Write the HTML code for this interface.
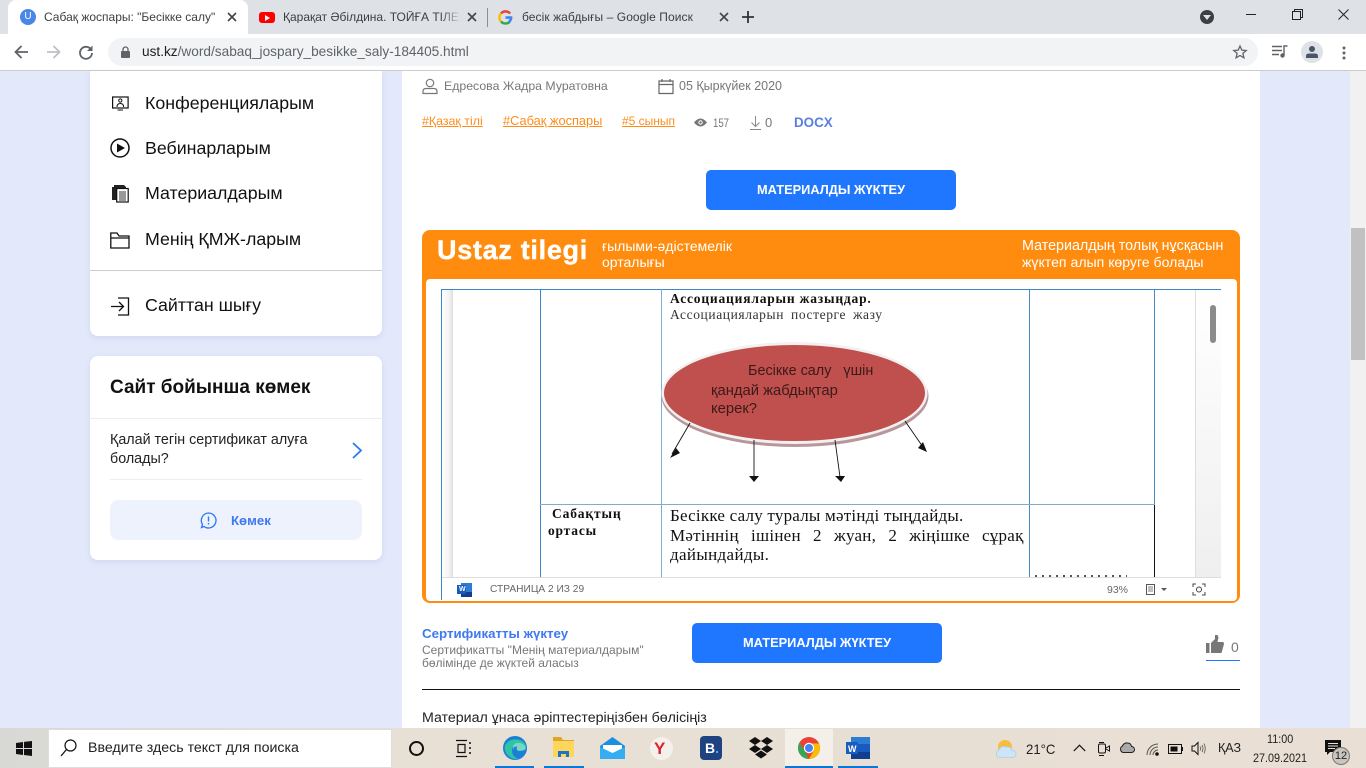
<!DOCTYPE html>
<html><head><meta charset="utf-8"><style>
*{box-sizing:border-box}
html,body{margin:0;padding:0;width:1366px;height:768px;overflow:hidden;background:#e3e9fb;font-family:"Liberation Sans","Noto Sans CJK SC",sans-serif}
.a{position:absolute}
.t{position:absolute;white-space:nowrap;line-height:1;transform-origin:0 50%}
svg{position:absolute;overflow:visible}
.s{font-family:"Liberation Serif","Noto Serif CJK SC",serif;color:#111}
</style></head><body>
<!-- chrome -->
<div class="a" style="left:0;top:0;width:1366px;height:34px;background:#dee1e6"></div>
<div class="a" style="left:0;top:34px;width:1366px;height:37px;background:#fff;border-bottom:1px solid #ccc"></div>
<div class="a" style="left:8px;top:0;width:240px;height:34px;background:#fff;border-radius:8px 8px 0 0"></div>
<div class="a" style="left:20px;top:9px;width:16px;height:16px;border-radius:50%;background:#4a86e8;color:#fff;font-size:10px;text-align:center;line-height:16px">U</div>
<div class="t" style="left:44px;top:11px;font-size:12px;color:#3c4043">Сабақ жоспары: "Бесікке салу"</div>
<svg style="left:227px;top:12px" width="10" height="10" viewBox="0 0 10 10"><path d="M1 1L9 9M9 1L1 9" stroke="#444" stroke-width="1.6"/></svg>
<div class="a" style="left:259px;top:12px;width:16px;height:11px;background:#f00;border-radius:3px"></div>
<svg style="left:265px;top:15px" width="5" height="6"><path d="M0 0L5 3L0 6Z" fill="#fff"/></svg>
<div class="t" style="left:283px;top:11px;font-size:12px;color:#3c4043;width:177px;overflow:hidden">Қарақат Әбілдина. ТОЙҒА ТІЛЕК</div>
<div class="a" style="left:440px;top:8px;width:22px;height:20px;background:linear-gradient(90deg,rgba(222,225,230,0),#dee1e6)"></div>
<svg style="left:467px;top:12px" width="10" height="10" viewBox="0 0 10 10"><path d="M1 1L9 9M9 1L1 9" stroke="#444" stroke-width="1.6"/></svg>
<div class="a" style="left:487px;top:8px;width:1px;height:19px;background:#8a8d91"></div>
<svg style="left:498px;top:10px" width="15" height="15" viewBox="0 0 16 16"><path d="M3.200 3.700A6.500 6.500 0 0 1 13 3.700" fill="none" stroke="#ea4335" stroke-width="2.600"/><path d="M3.300 3.500A6.500 6.500 0 0 0 3.300 12.500" fill="none" stroke="#fbbc05" stroke-width="2.600"/><path d="M3.200 12.300A6.500 6.500 0 0 0 12.500 12.600" fill="none" stroke="#34a853" stroke-width="2.600"/><path d="M8 6.700H15.200A7.200 7.200 0 0 1 12.800 13.500L10.800 11.700Q12 10.700 12.300 9.400H8Z" fill="#4285f4"/></svg>
<div class="t" style="left:522px;top:11px;font-size:12px;color:#3c4043;letter-spacing:.07px">бесік жабдығы – Google Поиск</div>
<svg style="left:719px;top:12px" width="10" height="10" viewBox="0 0 10 10"><path d="M1 1L9 9M9 1L1 9" stroke="#444" stroke-width="1.6"/></svg>
<svg style="left:741px;top:10px" width="14" height="14" viewBox="0 0 14 14"><path d="M7 1V13M1 7H13" stroke="#333" stroke-width="1.8"/></svg>
<div class="a" style="left:1200px;top:10px;width:14px;height:14px;border-radius:50%;background:#3c4043"></div>
<svg style="left:1203px;top:15px" width="8" height="5"><path d="M0 0H8L4 5Z" fill="#dee1e6"/></svg>
<div class="a" style="left:1246px;top:14px;width:10px;height:1px;background:#222"></div>
<svg style="left:1292px;top:9px" width="11" height="11" viewBox="0 0 11 11"><path d="M.5 2.500H8.500V10.500H.5ZM2.500 2.500V.5H10.500V8.500H8.500" fill="none" stroke="#222"/></svg>
<svg style="left:1338px;top:9px" width="11" height="11" viewBox="0 0 11 11"><path d="M.5 .5L10.500 10.500M10.500 .5L.5 10.500" stroke="#222" stroke-width="1"/></svg>
<svg style="left:14px;top:45px" width="15" height="14" viewBox="0 0 15 14"><path d="M14 7H2M7.500 1L1.500 7L7.500 13" fill="none" stroke="#5f6368" stroke-width="1.800"/></svg>
<svg style="left:46px;top:45px" width="15" height="14" viewBox="0 0 15 14"><path d="M1 7H13M7.500 1L13.500 7L7.500 13" fill="none" stroke="#bdc1c6" stroke-width="1.800"/></svg>
<svg style="left:79px;top:45px" width="14" height="14" viewBox="0 0 14 14"><path d="M12 4.500A6 6 0 1 0 13 8" fill="none" stroke="#5f6368" stroke-width="1.800"/><path d="M13.500 .5V6H8Z" fill="#5f6368"/></svg>
<div class="a" style="left:108px;top:38px;width:1150px;height:28px;border-radius:14px;background:#f1f3f4"></div>
<svg style="left:121px;top:46px" width="9" height="12" viewBox="0 0 9 12"><path d="M2 5V3.500A2.500 2.500 0 0 1 7 3.500V5" fill="none" stroke="#5f6368" stroke-width="1.300"/><rect y="5" width="9" height="7" rx="1" fill="#5f6368"/></svg>
<div class="t" style="left:142px;top:45px;font-size:13.650px;color:#5f6368"><span style="color:#202124">ust.kz</span>/word/sabaq_jospary_besikke_saly-184405.html</div>
<svg style="left:1233px;top:45px" width="14" height="14" viewBox="0 0 14 14"><path d="M7 1L8.800 5.100L13.200 5.500L9.900 8.400L10.900 12.800L7 10.500L3.100 12.800L4.100 8.400L.8 5.500L5.200 5.100Z" fill="none" stroke="#5f6368" stroke-width="1.300"/></svg>
<svg style="left:1272px;top:45px" width="16" height="13" viewBox="0 0 16 13"><path d="M0 1.500H10M0 5.500H10M0 9.500H7" stroke="#5f6368" stroke-width="1.400"/><path d="M12 10.500V1H15.500" fill="none" stroke="#5f6368" stroke-width="1.400"/><circle cx="10.500" cy="10.500" r="2.200" fill="#5f6368"/></svg>
<div class="a" style="left:1301px;top:41px;width:22px;height:22px;border-radius:50%;background:#dee1e6"></div>
<svg style="left:1306px;top:46px" width="12" height="12" viewBox="0 0 12 12"><circle cx="6" cy="3" r="3" fill="#4a5568"/><path d="M0 12V10Q0 7.500 3 7.500H9Q12 7.500 12 10V12Z" fill="#4a5568"/></svg>
<svg style="left:1342px;top:46px" width="4" height="14"><circle cx="2" cy="2" r="1.500" fill="#5f6368"/><circle cx="2" cy="7" r="1.500" fill="#5f6368"/><circle cx="2" cy="12" r="1.500" fill="#5f6368"/></svg>

<!-- page -->
<div class="a" style="left:1350px;top:71px;width:16px;height:657px;background:#f1f1f1"></div>
<div class="a" style="left:1351px;top:228px;width:14px;height:132px;background:#c1c1c1"></div>
<div class="a" style="left:90px;top:71px;width:292px;height:265px;background:#fff;border-radius:0 0 8px 8px;box-shadow:0 2px 6px rgba(120,135,190,.18)"></div>
<div class="a" style="left:90px;top:356px;width:292px;height:204px;background:#fff;border-radius:8px;box-shadow:0 2px 6px rgba(120,135,190,.18)"></div>
<div class="a" style="left:402px;top:71px;width:858px;height:657px;background:#fff"></div>

<!-- left menu -->
<svg style="left:112px;top:96px" width="17" height="16" viewBox="0 0 17 16"><rect x=".6" y="1" width="15.500" height="11" fill="none" stroke="#111" stroke-width="1.200"/><circle cx="8.300" cy="4.500" r="1.600" fill="none" stroke="#111"/><path d="M5 11Q5 7.500 8.300 7.500Q11.600 7.500 11.600 11M5.500 14H11" fill="none" stroke="#111"/></svg>
<div class="t" style="left:145px;top:95px;font-size:17.800px;color:#111">Конференцияларым</div>
<svg style="left:110px;top:138px" width="20" height="20" viewBox="0 0 20 20"><circle cx="10" cy="10" r="9" fill="none" stroke="#111" stroke-width="1.500"/><path d="M7 5.500L15 10L7 14.500Z" fill="#111"/></svg>
<div class="t" style="left:145px;top:140px;font-size:17.800px;color:#111">Вебинарларым</div>
<svg style="left:111px;top:184px" width="19" height="19" viewBox="0 0 19 19"><path d="M1 3H3V1H13L15 3V5H6V16H1Z" fill="#222"/><rect x="5.700" y="4.500" width="11.500" height="13.500" fill="#fff" stroke="#111" stroke-width="1.200"/><path d="M8 8H15M8 10H15M8 12H15M8 14H15M8 16H15" stroke="#333" stroke-width=".9"/></svg>
<div class="t" style="left:145px;top:185px;font-size:17.800px;color:#111">Материалдарым</div>
<svg style="left:110px;top:232px" width="20" height="17" viewBox="0 0 20 17"><path d="M.8 16V1H7L9 4H19V16ZM.8 6H19" fill="none" stroke="#111" stroke-width="1.300"/></svg>
<div class="t" style="left:145px;top:231px;font-size:17.800px;color:#111">Менің ҚМЖ-ларым</div>
<div class="a" style="left:90px;top:270px;width:292px;height:1px;background:#ccc"></div>
<svg style="left:110px;top:297px" width="20" height="19" viewBox="0 0 20 19"><path d="M8 1H18.500V18H8M1 9.500H13M9 5L13.500 9.500L9 14" fill="none" stroke="#111" stroke-width="1.300"/></svg>
<div class="t" style="left:145px;top:297px;font-size:17.800px;color:#111">Сайттан шығу</div>
<div class="t" style="left:110px;top:378px;font-size:19px;font-weight:bold;color:#111">Сайт бойынша көмек</div>
<div class="a" style="left:90px;top:418px;width:292px;height:1px;background:#eee"></div>
<div class="t" style="left:110px;top:433px;font-size:14.300px;color:#222">Қалай тегін сертификат алуға</div>
<div class="t" style="left:110px;top:452px;font-size:14.300px;color:#222">болады?</div>
<svg style="left:352px;top:442px" width="10" height="17" viewBox="0 0 10 17"><path d="M1 1L9 8.500L1 16" fill="none" stroke="#2a7af5" stroke-width="1.800"/></svg>
<div class="a" style="left:110px;top:479px;width:252px;height:1px;background:#eee"></div>
<div class="a" style="left:110px;top:500px;width:252px;height:40px;background:#eef2fd;border-radius:8px"></div>
<svg style="left:200px;top:512px" width="17" height="17" viewBox="0 0 17 17"><path d="M8.500 1A7.500 7.500 0 1 1 4 14.500L1.500 15.500L2.500 12.500A7.500 7.500 0 0 1 8.500 1Z" fill="none" stroke="#2a7af5" stroke-width="1.300"/><path d="M8.500 4.500V9.500M8.500 11V12.500" stroke="#2a7af5" stroke-width="1.400"/></svg>
<div class="t" style="left:231px;top:514px;font-size:13.200px;font-weight:bold;color:#3f78f0">Көмек</div>

<!-- meta -->
<svg style="left:422px;top:78px" width="16" height="16" viewBox="0 0 16 16"><circle cx="8" cy="5" r="3.700" fill="none" stroke="#777" stroke-width="1.200"/><path d="M1 15.500V13.500Q1 10.500 4 10.500H12Q15 10.500 15 13.500V15.500Z" fill="none" stroke="#777" stroke-width="1.200"/></svg>
<div class="t" style="left:444px;top:80px;font-size:12.300px;color:#777">Едресова Жадра Муратовна</div>
<svg style="left:658px;top:78px" width="16" height="16" viewBox="0 0 16 16"><path d="M1 3H15V15.500H1ZM1 6.500H15M4 1V4M12 1V4" fill="none" stroke="#666" stroke-width="1.200"/></svg>
<div class="t" style="left:679px;top:80px;font-size:12.500px;color:#777">05 Қыркүйек 2020</div>
<div class="t" style="left:422px;top:115px;font-size:12.400px;color:#ff8c1a;text-decoration:underline">#Қазақ тілі</div>
<div class="t" style="left:503px;top:115px;font-size:12.800px;color:#ff8c1a;text-decoration:underline">#Сабақ жоспары</div>
<div class="t" style="left:622px;top:115px;font-size:12px;color:#ff8c1a;text-decoration:underline">#5 сынып</div>
<svg style="left:694px;top:118px" width="13" height="9" viewBox="0 0 13 9"><path d="M0 4.500Q6.500 -3.500 13 4.500Q6.500 12.500 0 4.500Z" fill="#777"/><circle cx="6.500" cy="4.500" r="2.200" fill="#fff"/><circle cx="6.500" cy="4.500" r="1.200" fill="#777"/></svg>
<div class="t" style="left:713px;top:117px;font-size:12px;color:#777;transform:scaleX(.8)">157</div>
<svg style="left:750px;top:116px" width="11" height="14" viewBox="0 0 11 14"><path d="M5.500 0V10M1.500 6.500L5.500 10.500L9.500 6.500M0 13.500H11" fill="none" stroke="#888" stroke-width="1"/></svg>
<div class="t" style="left:765px;top:116px;font-size:13px;color:#777">0</div>
<div class="t" style="left:794px;top:116px;font-size:13.400px;font-weight:bold;color:#5a7fe0">DOCX</div>
<div class="a" style="left:706px;top:170px;width:250px;height:40px;background:#1f77ff;border-radius:5px"></div>
<div class="t" style="left:757px;top:184px;font-size:12.800px;font-weight:bold;color:#fff">МАТЕРИАЛДЫ ЖҮКТЕУ</div>

<!-- viewer frame -->
<div class="a" style="left:422px;top:230px;width:818px;height:373px;background:#ff8c0e;border-radius:8px"></div>
<div class="a" style="left:426px;top:279px;width:811px;height:322px;background:#fff;border-radius:4px"></div>
<div class="t" style="left:437px;top:237px;font-size:27px;font-weight:bold;color:#fff;letter-spacing:.7px;-webkit-text-stroke:.4px #fff">Ustaz tilegi</div>
<div class="t" style="left:602px;top:239px;font-size:14px;color:#fff">ғылыми-әдістемелік</div>
<div class="t" style="left:602px;top:255px;font-size:14px;color:#fff">орталығы</div>
<div class="t" style="left:1022px;top:239px;font-size:14.300px;color:#fff">Материалдың толық нұсқасын</div>
<div class="t" style="left:1022px;top:255px;font-size:14.100px;color:#fff">жүктеп алып көруге болады</div>

<div class="a" style="left:441px;top:289px;width:780px;height:311px;overflow:hidden;background:#fff">
 <div class="a" style="left:0;top:0;width:780px;height:1px;background:#3d85c6"></div>
 <div class="a" style="left:0;top:0;width:1px;height:311px;background:#3d85c6"></div>
 <div class="a" style="left:1px;top:1px;width:11px;height:287px;background:linear-gradient(90deg,#fff,#f2f2f2 70%,#dcdcdc)"></div>
 <div class="a" style="left:754px;top:1px;width:26px;height:287px;background:linear-gradient(180deg,#fff,#efefef);border-left:1px solid #ddd"></div>
 <div class="a" style="left:99px;top:0;width:1px;height:288px;background:#3d85c6"></div>
 <div class="a" style="left:220px;top:0;width:1px;height:288px;background:#7fadd0"></div>
 <div class="a" style="left:588px;top:0;width:1px;height:288px;background:#4a8fc4"></div>
 <div class="a" style="left:713px;top:0;width:1px;height:215px;background:#4a8fc4"></div>
 <div class="a" style="left:713px;top:215px;width:1px;height:73px;background:#111"></div>
 <div class="a" style="left:99px;top:215px;width:615px;height:1px;background:#7fadd0"></div>
 <div class="a" style="left:769px;top:16px;width:6px;height:38px;background:#8a8a8a;border-radius:3px"></div>
 <div class="a" style="left:1px;top:288px;width:779px;height:23px;background:#fff;border-top:1px solid #ddd"></div>
</div>
<div class="t s" style="left:670px;top:292px;font-size:13.500px;font-weight:bold;letter-spacing:.8px">Ассоциацияларын жазыңдар.</div>
<div class="t s" style="left:670px;top:308px;font-size:13.500px;color:#333;letter-spacing:.6px;word-spacing:3px">Ассоциацияларын постерге жазу</div>
<svg style="left:660px;top:340px" width="280" height="150" viewBox="0 0 280 150">
<ellipse cx="135" cy="56" rx="133.500" ry="51" fill="#b8979a"/>
<ellipse cx="134.500" cy="53" rx="133" ry="51" fill="#f2f0f0"/>
<ellipse cx="134.500" cy="53" rx="130.500" ry="48" fill="#c0504d"/>
<g stroke="#111" stroke-width=".9"><path d="M30 83L12 114"/><path d="M94 100L94 137"/><path d="M175 100L180 137"/><path d="M245 81L265 110"/></g>
<g fill="#111"><path d="M16 108L10 118L20 113Z"/><path d="M89 136H99L94 142Z"/><path d="M175 136H185L181 142Z"/><path d="M258 108L267 112L263 102Z"/></g>
</svg>
<div class="t" style="left:748px;top:364px;font-size:14.400px;color:#3a1a1a;white-space:pre">Бесікке салу   үшін</div>
<div class="t" style="left:711px;top:384px;font-size:14.800px;color:#3a1a1a">қандай жабдықтар</div>
<div class="t" style="left:711px;top:402px;font-size:14.800px;color:#3a1a1a">керек?</div>
<div class="t s" style="left:552px;top:507px;font-size:13.500px;font-weight:bold;letter-spacing:.85px">Сабақтың</div>
<div class="t s" style="left:548px;top:524px;font-size:13.500px;font-weight:bold;letter-spacing:.8px">ортасы</div>
<div class="t s" style="left:670px;top:507px;font-size:17px;letter-spacing:.22px">Бесікке салу туралы мәтінді тыңдайды.</div>
<div class="t s" style="left:670px;top:527px;font-size:17px;letter-spacing:.25px;word-spacing:7.700px">Мәтіннің ішінен 2 жуан, 2 жіңішке сұрақ</div>
<div class="t s" style="left:670px;top:546px;font-size:17px;letter-spacing:.35px">дайындайды.</div>
<div class="a" style="left:1035px;top:575px;width:92px;height:2px;background:repeating-linear-gradient(90deg,#555 0 2px,transparent 2px 7px)"></div>
<svg style="left:457px;top:583px" width="15" height="14" viewBox="0 0 15 14"><rect x="4" width="11" height="14" fill="#2b7cd3"/><rect x="4" y="9" width="11" height="5" fill="#103f91"/><rect y="2" width="9" height="9" fill="#185abd"/></svg>
<div class="t" style="left:459px;top:586px;font-size:7px;font-weight:bold;color:#fff">W</div>
<div class="t" style="left:490px;top:585px;font-size:10.200px;color:#666">СТРАНИЦА 2 ИЗ 29</div>
<div class="t" style="left:1107px;top:585px;font-size:10.500px;color:#666">93%</div>
<svg style="left:1146px;top:584px" width="22" height="11" viewBox="0 0 22 11"><rect x=".5" y=".5" width="8" height="10" fill="none" stroke="#555"/><path d="M2 3H7M2 5H7M2 7H7" stroke="#555" stroke-width=".8"/><path d="M15 4H21L18 7Z" fill="#555"/></svg>
<svg style="left:1193px;top:584px" width="12" height="11" viewBox="0 0 12 11"><path d="M0 3V0H3M9 0H12V3M12 8V11H9M3 11H0V8" fill="none" stroke="#444"/><circle cx="6" cy="5.500" r="2.500" fill="none" stroke="#444"/></svg>

<!-- bottom content -->
<div class="t" style="left:422px;top:627px;font-size:13.300px;font-weight:bold;color:#3f78f0">Сертификатты жүктеу</div>
<div class="t" style="left:422px;top:644px;font-size:12px;color:#777;letter-spacing:.02px">Сертификатты "Менің материалдарым"</div>
<div class="t" style="left:422px;top:657px;font-size:12px;color:#777">бөлімінде де жүктей аласыз</div>
<div class="a" style="left:692px;top:623px;width:250px;height:40px;background:#1f77ff;border-radius:5px"></div>
<div class="t" style="left:743px;top:637px;font-size:12.800px;font-weight:bold;color:#fff">МАТЕРИАЛДЫ ЖҮКТЕУ</div>
<svg style="left:1206px;top:635px" width="18" height="19" viewBox="0 0 18 19"><rect y="8" width="3.500" height="10" fill="#777"/><path d="M5 8L9 4V0H11.500L12.500 2.500L11.500 7H17.500L18 9L15.500 18H5Z" fill="#777"/></svg>
<div class="t" style="left:1231px;top:640px;font-size:14px;color:#777">0</div>
<div class="a" style="left:1206px;top:660px;width:34px;height:1px;background:#1f77ff"></div>
<div class="a" style="left:422px;top:689px;width:818px;height:1px;background:#111"></div>
<div class="t" style="left:422px;top:711px;font-size:14.200px;color:#222">Материал ұнаса әріптестеріңізбен бөлісіңіз</div>

<!-- taskbar -->
<div class="a" style="left:0;top:728px;width:1366px;height:40px;background:linear-gradient(90deg,#d8d9d5,#e8dfd5 30%,#e9dfd4)"></div>
<svg style="left:16px;top:741px" width="16" height="15" viewBox="0 0 16 15"><path d="M0 2L7 1V7H0ZM8 .9L16 0V7H8ZM0 8H7V14L0 13ZM8 8H16V15L8 14Z" fill="#111"/></svg>
<div class="a" style="left:48px;top:729px;width:344px;height:39px;background:#fff;border:1px solid #ddd"></div>
<svg style="left:60px;top:739px" width="17" height="18" viewBox="0 0 17 18"><circle cx="10.500" cy="6.500" r="5.500" fill="none" stroke="#111" stroke-width="1.200"/><path d="M6.500 10.500L1 17" stroke="#111" stroke-width="1.300"/></svg>
<div class="t" style="left:88px;top:741px;font-size:14.200px;color:#222">Введите здесь текст для поиска</div>
<div class="a" style="left:409px;top:741px;width:15px;height:15px;border-radius:50%;border:2.500px solid #111"></div>
<svg style="left:455px;top:740px" width="17" height="17" viewBox="0 0 17 17"><path d="M1 .5H12M1 16.500H12M3 4.500H10V12.500H3Z" fill="none" stroke="#111" stroke-width="1.200"/><path d="M14 3H16M14 8H16M14 13H16" stroke="#111" stroke-width="1.500"/></svg>
<svg style="left:503px;top:736px" width="24" height="24" viewBox="0 0 24 24"><circle cx="12" cy="12" r="12" fill="#1b7fd4"/><path d="M2 14A10 8 0 0 1 23 10Q23 15 16 15Q13 15 14 11Q9 9 9 15Q9 20 15 23A12 12 0 0 1 2 14Z" fill="#2fc4a8"/><path d="M10 15Q10 10 15 10.500Q12 13 15 14.500Q20 15.500 23 13Q22 8 17 7Q12 6 10 10Z" fill="#fff" opacity=".35"/></svg>
<svg style="left:553px;top:737px" width="21" height="22" viewBox="0 0 21 22"><path d="M0 0H8L10 3H21V20H0Z" fill="#e0a526"/><rect y="4" width="21" height="16" fill="#ffd65c"/><path d="M5 14H16V20H13V17H8V20H5Z" fill="#1e73c8"/></svg>
<svg style="left:600px;top:737px" width="25" height="22" viewBox="0 0 25 22"><path d="M0 9L12.500 0L25 9V22H0Z" fill="#1b8fe0"/><path d="M3 8H22V12L12.500 17L3 12Z" fill="#fff"/><path d="M0 10L12.500 16L25 10V22H0Z" fill="#35aef0"/></svg>
<div class="a" style="left:650px;top:737px;width:23px;height:23px;border-radius:50%;background:#f4f1ec"></div>
<div class="t" style="left:654px;top:740px;font-size:17px;font-weight:bold;color:#e1212b">Y</div>
<div class="a" style="left:700px;top:736px;width:22px;height:24px;border-radius:4px;background:#1f4381"></div>
<div class="t" style="left:705px;top:741px;font-size:14px;font-weight:bold;color:#fff">B<span style="color:#4ab4f0">.</span></div>
<svg style="left:749px;top:737px" width="24" height="22" viewBox="0 0 24 22"><path d="M6 0L12 4L6 8L0 4ZM18 0L24 4L18 8L12 4ZM6 8L12 12L6 16L0 12ZM18 8L24 12L18 16L12 12ZM6 17.500L12 13.500L18 17.500L12 21.500Z" fill="#111"/></svg>
<div class="a" style="left:785px;top:729px;width:48px;height:39px;background:#f4efe9"></div>
<svg style="left:798px;top:737px" width="22" height="22" viewBox="0 0 22 22"><circle cx="11" cy="11" r="11" fill="#ea4335"/><path d="M1.500 5.500L7 14.500L11 22A11 11 0 0 1 1.500 5.500Z" fill="#34a853"/><path d="M11 6.500H21A11 11 0 0 1 11 22L16 13Z" fill="#fbbc05"/><circle cx="11" cy="11" r="5.200" fill="#fff"/><circle cx="11" cy="11" r="4" fill="#4285f4"/></svg>
<svg style="left:846px;top:737px" width="24" height="22" viewBox="0 0 24 22"><rect x="5" width="19" height="22" fill="#2b7cd3"/><rect x="5" y="15" width="19" height="7" fill="#103f91"/><rect x="5" y="7" width="19" height="8" fill="#185abd"/><rect y="5" width="12" height="12" fill="#1a5cbf"/></svg>
<div class="t" style="left:848px;top:745px;font-size:9px;font-weight:bold;color:#fff">W</div>
<div class="a" style="left:495px;top:766px;width:39px;height:2px;background:#0a78d4"></div>
<div class="a" style="left:544px;top:766px;width:40px;height:2px;background:#0a78d4"></div>
<div class="a" style="left:785px;top:766px;width:48px;height:2px;background:#0a78d4"></div>
<div class="a" style="left:838px;top:766px;width:40px;height:2px;background:#0a78d4"></div>
<svg style="left:995px;top:740px" width="22" height="18" viewBox="0 0 22 18"><circle cx="10" cy="7" r="7" fill="#f8bd3c"/><path d="M4 17.500A4 4 0 0 1 4 10Q6 5 11 7Q16 6 17 10.500A3.500 3.500 0 0 1 18 17.500Z" fill="#cfe4f6" stroke="#a8cfee" stroke-width=".8"/></svg>
<div class="t" style="left:1026px;top:742px;font-size:14px;color:#222;transform:scaleX(.94)">21°C</div>
<svg style="left:1073px;top:744px" width="13" height="8" viewBox="0 0 13 8"><path d="M.8 7L6.500 1.200L12.200 7" fill="none" stroke="#111" stroke-width="1.200"/></svg>
<svg style="left:1098px;top:741px" width="12" height="16" viewBox="0 0 12 16"><rect x=".5" y="3" width="7" height="9" rx="1.500" fill="none" stroke="#111"/><path d="M8 7L11.500 5V10L8 8M1 1.500H6M1 14.500H6" fill="none" stroke="#111"/></svg>
<svg style="left:1119px;top:742px" width="16" height="11" viewBox="0 0 16 11"><path d="M4 10.500A3.500 3.500 0 0 1 3.500 4Q5 .5 8.500 1Q12 1 12.500 4.500A3 3 0 0 1 12.500 10.500Z" fill="#aaa" stroke="#222"/></svg>
<svg style="left:1146px;top:743px" width="13" height="13" viewBox="0 0 13 13"><path d="M1 12A11 11 0 0 1 12 1M4 12A8 8 0 0 1 12 4M7 12A5 5 0 0 1 12 7" fill="none" stroke="#555"/><circle cx="11" cy="11" r="1.800" fill="#111"/></svg>
<svg style="left:1168px;top:744px" width="15" height="10" viewBox="0 0 15 10"><rect x=".5" y=".5" width="13" height="9" fill="none" stroke="#111"/><rect x="2.500" y="2.500" width="7" height="5" fill="#111"/><rect x="14" y="3" width="1" height="4" fill="#111"/></svg>
<svg style="left:1191px;top:741px" width="15" height="15" viewBox="0 0 15 15"><path d="M1 5H3.500L7 1.500V13.500L3.500 10H1Z" fill="none" stroke="#111"/><path d="M9 5.500Q10.500 7.500 9 9.500M11 4Q13 7.500 11 11M13 2.500Q15.500 7.500 13 12.500" fill="none" stroke="#555" stroke-width=".8"/></svg>
<div class="t" style="left:1218px;top:742px;font-size:12.500px;color:#222">ҚАЗ</div>
<div class="t" style="left:1267px;top:733px;font-size:12px;color:#222;transform:scaleX(.9)">11:00</div>
<div class="t" style="left:1253px;top:752px;font-size:12px;color:#222;transform:scaleX(.9)">27.09.2021</div>
<svg style="left:1325px;top:740px" width="16" height="16" viewBox="0 0 16 16"><path d="M0 0H16V12H5L2 15V12H0Z" fill="#111"/><path d="M3 3.500H13M3 6H13M3 8.500H10" stroke="#e9dfd4"/></svg>
<div class="a" style="left:1332px;top:747px;width:18px;height:18px;border-radius:50%;background:#c8c4be;border:1px solid #777;font-size:11px;line-height:16px;text-align:center;color:#222">12</div>
</body></html>
